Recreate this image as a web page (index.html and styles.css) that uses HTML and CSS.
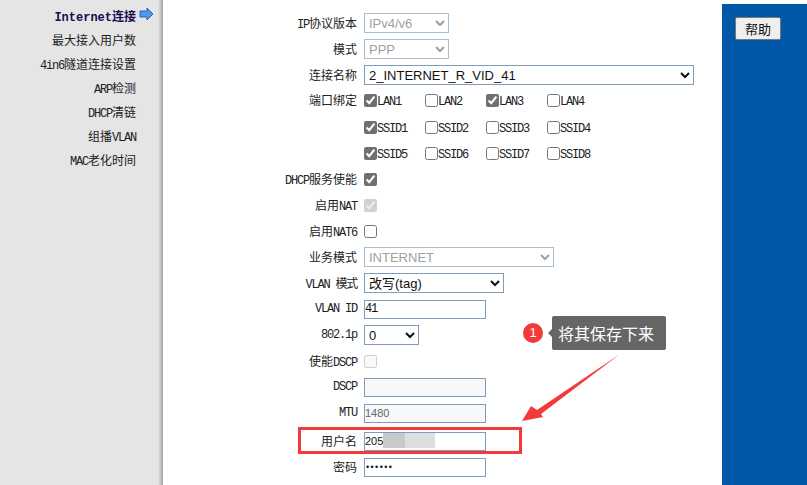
FILE: index.html
```html
<!DOCTYPE html>
<html lang="zh-CN">
  <head>
    <meta charset="UTF-8" />
    <title>Internet连接</title>
    <link rel="stylesheet" href="styles.css">
  </head>
  <body>
    <div class="page">
      <nav class="sidebar">
        <div class="nav-item active">
          <a>Internet连接</a>
          <svg class="nav-arrow" width="15" height="14" viewBox="0 0 15 14">
            <path d="M1 4H8V1L14 7L8 13V10H1Z" fill="#4a9be8" stroke="#2a62b0" stroke-width="1"/>
          </svg>
        </div>
        <div class="nav-item"><a>最大接入用户数</a></div>
        <div class="nav-item"><a><span class="en">4in6</span>隧道连接设置</a></div>
        <div class="nav-item"><a><span class="en">ARP</span>检测</a></div>
        <div class="nav-item"><a><span class="en">DHCP</span>清链</a></div>
        <div class="nav-item"><a>组播<span class="en">VLAN</span></a></div>
        <div class="nav-item"><a><span class="en">MAC</span>老化时间</a></div>
      </nav>

      <main class="form">
        <div class="row">
          <label><span class="en">IP</span>协议版本</label>
          <select class="sel-short" disabled><option>IPv4/v6</option></select>
        </div>
        <div class="row">
          <label>模式</label>
          <select class="sel-short" disabled><option>PPP</option></select>
        </div>
        <div class="row">
          <label>连接名称</label>
          <select class="sel-name"><option>2_INTERNET_R_VID_41</option></select>
        </div>
        <div class="row row-first">
          <label>端口绑定</label>
          <div class="checks">
            <span class="check"><input type="checkbox" checked /><span class="en">LAN1</span></span>
            <span class="check"><input type="checkbox" /><span class="en">LAN2</span></span>
            <span class="check"><input type="checkbox" checked /><span class="en">LAN3</span></span>
            <span class="check"><input type="checkbox" /><span class="en">LAN4</span></span>
          </div>
        </div>
        <div class="row">
          <label></label>
          <div class="checks">
            <span class="check"><input type="checkbox" checked /><span class="en">SSID1</span></span>
            <span class="check"><input type="checkbox" /><span class="en">SSID2</span></span>
            <span class="check"><input type="checkbox" /><span class="en">SSID3</span></span>
            <span class="check"><input type="checkbox" /><span class="en">SSID4</span></span>
          </div>
        </div>
        <div class="row">
          <label></label>
          <div class="checks">
            <span class="check"><input type="checkbox" checked /><span class="en">SSID5</span></span>
            <span class="check"><input type="checkbox" /><span class="en">SSID6</span></span>
            <span class="check"><input type="checkbox" /><span class="en">SSID7</span></span>
            <span class="check"><input type="checkbox" /><span class="en">SSID8</span></span>
          </div>
        </div>
        <div class="row">
          <label><span class="en">DHCP</span>服务使能</label>
          <input type="checkbox" checked />
        </div>
        <div class="row">
          <label>启用<span class="en">NAT</span></label>
          <input type="checkbox" checked disabled />
        </div>
        <div class="row">
          <label>启用<span class="en">NAT6</span></label>
          <input type="checkbox" />
        </div>
        <div class="row">
          <label>业务模式</label>
          <select class="sel-mode" disabled><option>INTERNET</option></select>
        </div>
        <div class="row">
          <label><span class="en">VLAN 模式</span></label>
          <select class="sel-vlan"><option>改写(tag)</option></select>
        </div>
        <div class="row">
          <label><span class="en">VLAN ID</span></label>
          <input class="text text-mono" type="text" value="41" />
        </div>
        <div class="row">
          <label><span class="en">802.1p</span></label>
          <select class="sel-pri"><option>0</option></select>
        </div>
        <div class="row">
          <label>使能<span class="en">DSCP</span></label>
          <input type="checkbox" disabled />
        </div>
        <div class="row">
          <label><span class="en">DSCP</span></label>
          <input class="text" type="text" disabled />
        </div>
        <div class="row">
          <label><span class="en">MTU</span></label>
          <input class="text" type="text" value="1480" disabled />
        </div>
        <div class="row row-user">
          <label>用户名</label>
          <input class="text" type="text" value="205" />
        </div>
        <div class="row">
          <label>密码</label>
          <input class="text" type="password" value="123456" />
        </div>
      </main>

      <aside class="help-panel">
        <button class="help-btn">帮助</button>
      </aside>
    </div>

    <!-- annotations drawn over the screenshot -->
    <div class="blur blur-a"></div>
    <div class="blur blur-b"></div>
    <div class="highlight"></div>
    <div class="step">1</div>
    <div class="tip">将其保存下来</div>
    <svg class="pointer" width="110" height="80" viewBox="0 0 110 80">
      <path d="M108 2L25 58L19 54L10 69L31 65L29 62Z" fill="#f33a3a"/>
    </svg>
  </body>
</html>
```

FILE: styles.css
```css
html,
body {
  margin: 0;
  height: 485px;
  overflow: hidden;
  background-color: white;
}
body {
  font-family: "Liberation Mono", "Noto Sans CJK SC", monospace;
  font-size: 12px;
  color: #222;
}
.en {
  letter-spacing: -1.2px;
}
.page {
  display: flex;
  height: 485px;
}

/* left menu */
.sidebar {
  width: 163px;
  flex-shrink: 0;
  padding-top: 4px;
  box-sizing: border-box;
  background: linear-gradient(to right, #e5e5e5 158px, #cdcdcd 160px, #a0a0a0 163px);
}
.nav-item {
  display: grid;
  grid-template-columns: 1fr 27px;
  align-items: center;
  height: 24px;
  text-align: right;
}
.nav-item.active a {
  font-weight: bold;
  color: #1a0a50;
}
.nav-arrow {
  margin-left: 3px;
  margin-top: -4px;
}

/* form */
.form {
  flex: 1;
  padding-top: 10px;
}
.row {
  display: flex;
  align-items: center;
  gap: 7px;
  height: 26px;
}
.row label {
  width: 194px;
  text-align: right;
}
.row-first {
  height: 24px;
  margin-bottom: 2px;
}
.row-user {
  margin-top: 2px;
}
select {
  height: 20px;
  box-sizing: border-box;
  border: 1px solid #7f9db9;
  border-radius: 0;
  background-color: white;
  font-family: "Liberation Sans", "Noto Sans CJK SC", sans-serif;
  font-size: 13px;
  color: #111;
}
select:disabled {
  color: #a0a0a0;
  border-color: #a9bfd3;
  opacity: 1;
}
.sel-short {
  width: 85px;
}
.sel-name {
  width: 330px;
}
.sel-mode {
  width: 190px;
}
.sel-vlan {
  width: 140px;
}
.sel-pri {
  width: 55px;
}
input[type="checkbox"] {
  width: 13px;
  height: 13px;
  margin: 0;
  accent-color: #707070;
}
.text {
  width: 122px;
  height: 19px;
  box-sizing: border-box;
  padding: 0;
  border: 1px solid #7f9db9;
  font-family: "Liberation Sans", sans-serif;
  font-size: 11px;
  color: #111;
}
.text-mono {
  font-family: "Liberation Mono", monospace;
  font-size: 12px;
  letter-spacing: -1.2px;
}
.text:disabled {
  background-color: #f8f8f8;
  color: #666;
}
input[type="password"] {
  padding-left: 1px;
  font-size: 9px;
  letter-spacing: 1.4px;
}
.checks {
  display: flex;
}
.check {
  display: flex;
  width: 61px;
  align-items: center;
}
.check .en {
  margin-top: 3px;
}

/* right panel */
.help-panel {
  width: 85px;
  flex-shrink: 0;
  margin-top: 4px;
  padding: 13px 0 0 13px;
  box-sizing: border-box;
  background-color: #0059a8;
}
.help-btn {
  width: 46px;
  height: 23px;
  padding: 0;
  border: 1px solid #777;
  border-radius: 2px;
  background-color: #efefef;
  font-family: "Noto Sans CJK SC", sans-serif;
  font-size: 13px;
  color: #111;
}

/* annotations */
.highlight {
  position: absolute;
  left: 298px;
  top: 427px;
  width: 218px;
  height: 21px;
  border: 3px solid #f33a3a;
}
.blur {
  position: absolute;
  top: 433px;
  height: 15px;
}
.blur-a {
  left: 383px;
  width: 23px;
  background-color: #c9c9c9;
}
.blur-b {
  left: 405px;
  width: 30px;
  background-color: #dedede;
}
.step {
  position: absolute;
  left: 523px;
  top: 323px;
  width: 20px;
  height: 20px;
  border-radius: 50%;
  background-color: #f33a3a;
  color: white;
  font-family: "Liberation Sans", sans-serif;
  font-size: 13px;
  line-height: 20px;
  text-align: center;
}
.tip {
  position: absolute;
  left: 552px;
  top: 316px;
  width: 108px;
  height: 34px;
  padding-left: 6px;
  border-radius: 2px;
  background-color: #666;
  color: white;
  font-family: "Noto Sans CJK SC", sans-serif;
  font-size: 16px;
  line-height: 34px;
}
.tip::before {
  content: "";
  position: absolute;
  left: -4px;
  top: 13px;
  border-style: solid;
  border-width: 4px 4px 4px 0;
  border-color: transparent #666 transparent transparent;
}
.pointer {
  position: absolute;
  left: 512px;
  top: 352px;
}
```
